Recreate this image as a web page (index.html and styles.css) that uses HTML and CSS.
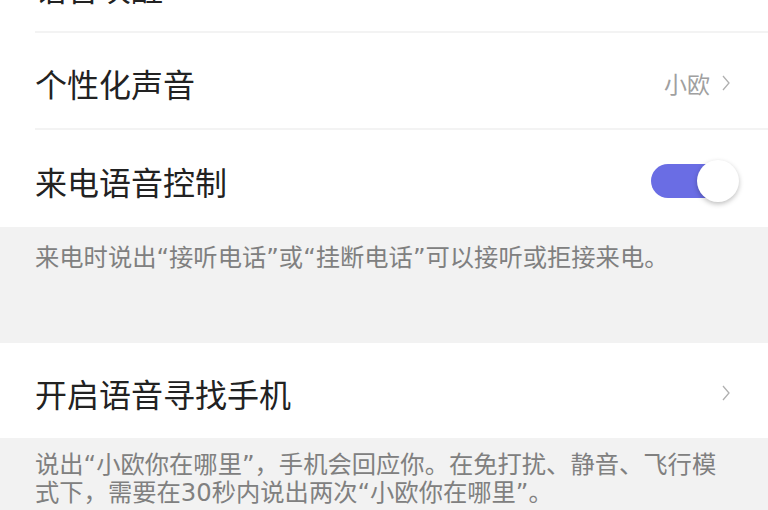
FILE: index.html
```html
<!DOCTYPE html>
<html lang="zh-CN">
<head>
<meta charset="utf-8">
<link rel="stylesheet" href="styles.css">
</head>
<body>
<div class="page">
  <div class="row divided row-first">
    <span class="title">语音唤醒</span>
    <span class="right">
      <svg class="chev" viewBox="0 0 8 16" width="8" height="16"><polyline points="1,1 7,8 1,15" fill="none" stroke="#b0b0b0" stroke-width="1.3"/></svg>
    </span>
  </div>
  <div class="row divided">
    <span class="title">个性化声音</span>
    <span class="right">
      <span class="value">小欧</span>
      <svg class="chev" viewBox="0 0 8 16" width="8" height="16"><polyline points="1,1 7,8 1,15" fill="none" stroke="#b0b0b0" stroke-width="1.3"/></svg>
    </span>
  </div>
  <div class="row">
    <span class="title">来电语音控制</span>
    <span class="toggle"><span class="knob"></span></span>
  </div>
  <div class="note note-first">
    <p>来电时说出“接听电话”或“挂断电话”可以接听或拒接来电。</p>
  </div>
  <div class="row row-last">
    <span class="title">开启语音寻找手机</span>
    <span class="right">
      <svg class="chev" viewBox="0 0 8 16" width="8" height="16"><polyline points="1,1 7,8 1,15" fill="none" stroke="#b0b0b0" stroke-width="1.3"/></svg>
    </span>
  </div>
  <div class="note note-second">
    <p>说出“小欧你在哪里”，手机会回应你。在免打扰、静音、飞行模式下，需要在30秒内说出两次“小欧你在哪里”。</p>
  </div>
</div>
</body>
</html>
```
FILE: styles.css
```css
html, body {
  margin: 0;
  padding: 0;
  background: #ffffff;
}
body {
  width: 768px;
  height: 510px;
  overflow: hidden;
  font-family: "Noto Sans CJK SC", sans-serif;
}
.page {
  margin-top: -62px;
  display: flex;
  flex-direction: column;
}
.row {
  box-sizing: border-box;
  height: 97px;
  margin-left: 35px;
  padding-top: 5px;
  display: flex;
  align-items: center;
  justify-content: space-between;
}
.row-first {
  height: 95px;
}
.row.divided {
  border-bottom: 2px solid #f3f3f3;
}
.row-last {
  height: 95px;
}
.title {
  font-size: 32px;
  color: #222222;
  line-height: 40px;
}
.right {
  display: flex;
  align-items: center;
  gap: 12px;
  padding-right: 38px;
}
.value {
  font-size: 23px;
  color: #a0a0a0;
}
.chev {
  display: block;
}
.toggle {
  position: relative;
  width: 82px;
  height: 34px;
  border-radius: 17px;
  background: #6a6de4;
  margin-right: 35px;
}
.knob {
  position: absolute;
  right: -6px;
  top: -4px;
  width: 42px;
  height: 42px;
  border-radius: 50%;
  background: #ffffff;
  box-shadow: 0 2px 5px rgba(0,0,0,0.25);
}
.note {
  background: #f2f2f2;
  padding: 0 33px 0 35px;
}
.note p {
  margin: 0;
  font-family: "DejaVu Sans", "Noto Sans CJK SC", sans-serif;
  font-size: 24.3px;
  line-height: 28px;
  color: #808080;
}
.note-first {
  height: 116px;
  box-sizing: border-box;
  padding-top: 17px;
}
.note-second {
  padding-top: 13px;
  padding-bottom: 20px;
}
```
